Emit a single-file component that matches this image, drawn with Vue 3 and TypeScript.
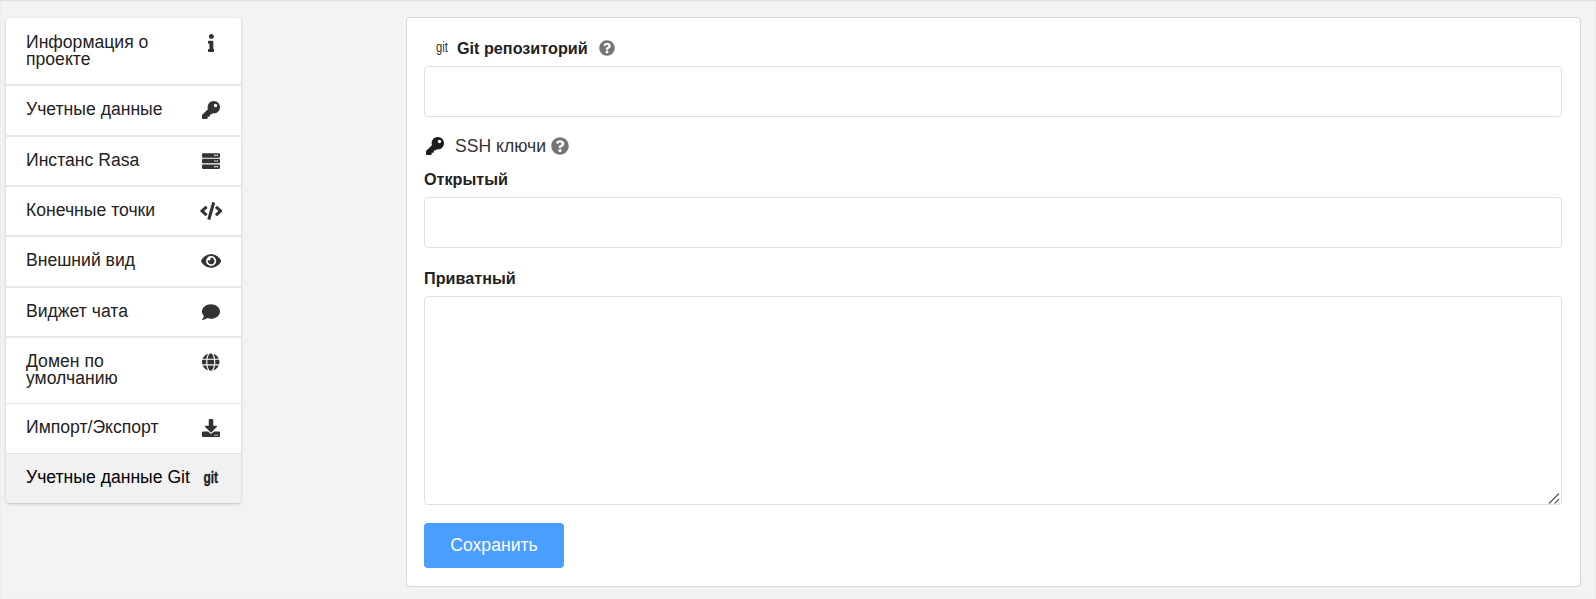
<script setup lang="ts">
type MenuItem = { label: string; viewBox?: string; path?: string; active?: boolean };

const keyPath =
  "M512 176.001C512 273.203 433.202 352 336 352c-11.22 0-22.19-1.062-32.827-3.069l-24.012 27.014A23.999 23.999 0 0 1 261.223 384H224v40c0 13.255-10.745 24-24 24h-40v40c0 13.255-10.745 24-24 24H24c-13.255 0-24-10.745-24-24v-78.059c0-6.365 2.529-12.47 7.029-16.971l161.802-161.802C163.108 213.814 160 195.271 160 176 160 78.798 238.797.001 335.999 0 433.488-.001 512 78.511 512 176.001zM336 128c0 26.51 21.49 48 48 48s48-21.49 48-48-21.49-48-48-48-48 21.49-48 48z";
const questionPath =
  "M504 256c0 136.997-111.043 248-248 248S8 392.997 8 256C8 119.083 119.043 8 256 8s248 111.083 248 248zM262.655 90c-54.497 0-89.255 22.957-116.549 63.758-3.536 5.286-2.353 12.415 2.715 16.258l34.699 26.31c5.205 3.947 12.621 3.008 16.665-2.122 17.864-22.658 30.113-35.797 57.303-35.797 20.429 0 45.698 13.148 45.698 32.958 0 14.976-12.363 22.667-32.534 33.976C247.128 238.528 216 254.941 216 296v4c0 6.627 5.373 12 12 12h56c6.627 0 12-5.373 12-12v-1.333c0-28.462 83.186-29.647 83.186-106.667 0-58.002-60.165-102-116.531-102zM256 338c-25.365 0-46 20.635-46 46 0 25.364 20.635 46 46 46s46-20.636 46-46c0-25.365-20.635-46-46-46z";

const items: MenuItem[] = [
  {
    label: "Информация о проекте",
    viewBox: "0 0 192 512",
    path: "M20 424.229h20V279.771H20c-11.046 0-20-8.954-20-20V212c0-11.046 8.954-20 20-20h112c11.046 0 20 8.954 20 20v212.229h20c11.046 0 20 8.954 20 20V492c0 11.046-8.954 20-20 20H20c-11.046 0-20-8.954-20-20v-47.771c0-11.046 8.954-20 20-20zM96 0C56.235 0 24 32.235 24 72s32.235 72 72 72 72-32.235 72-72S135.764 0 96 0z",
  },
  { label: "Учетные данные", viewBox: "0 0 512 512", path: keyPath },
  {
    label: "Инстанс Rasa",
    viewBox: "0 0 512 512",
    path: "M480 160H32c-17.673 0-32-14.327-32-32V64c0-17.673 14.327-32 32-32h448c17.673 0 32 14.327 32 32v64c0 17.673-14.327 32-32 32zm-48-88c-13.255 0-24 10.745-24 24s10.745 24 24 24 24-10.745 24-24-10.745-24-24-24zm-64 0c-13.255 0-24 10.745-24 24s10.745 24 24 24 24-10.745 24-24-10.745-24-24-24zm112 248H32c-17.673 0-32-14.327-32-32v-64c0-17.673 14.327-32 32-32h448c17.673 0 32 14.327 32 32v64c0 17.673-14.327 32-32 32zm-48-88c-13.255 0-24 10.745-24 24s10.745 24 24 24 24-10.745 24-24-10.745-24-24-24zm-64 0c-13.255 0-24 10.745-24 24s10.745 24 24 24 24-10.745 24-24-10.745-24-24-24zm112 248H32c-17.673 0-32-14.327-32-32v-64c0-17.673 14.327-32 32-32h448c17.673 0 32 14.327 32 32v64c0 17.673-14.327 32-32 32zm-48-88c-13.255 0-24 10.745-24 24s10.745 24 24 24 24-10.745 24-24-10.745-24-24-24zm-64 0c-13.255 0-24 10.745-24 24s10.745 24 24 24 24-10.745 24-24-10.745-24-24-24z",
  },
  {
    label: "Конечные точки",
    viewBox: "0 0 640 512",
    path: "M278.9 511.5l-61-17.7c-6.4-1.8-10-8.5-8.2-14.9L346.2 8.7c1.8-6.4 8.5-10 14.9-8.2l61 17.7c6.4 1.8 10 8.5 8.2 14.9L293.8 503.3c-1.9 6.4-8.5 10.1-14.9 8.2zm-114-112.2l43.5-46.4c4.6-4.9 4.3-12.7-.8-17.2L117 256l90.6-79.7c5.1-4.5 5.5-12.3.8-17.2l-43.5-46.4c-4.5-4.8-12.1-5.1-17-.5L3.8 247.2c-5.1 4.7-5.1 12.8 0 17.5l144.1 135.1c4.9 4.6 12.5 4.4 17-.5zm327.2.6l144.1-135.1c5.1-4.7 5.1-12.8 0-17.5L492.1 112.1c-4.8-4.5-12.4-4.3-17 .5L431.6 159c-4.6 4.9-4.3 12.7.8 17.2L523 256l-90.6 79.7c-5.1 4.5-5.5 12.3-.8 17.2l43.5 46.4c4.5 4.9 12.1 5.1 17 .6z",
  },
  {
    label: "Внешний вид",
    viewBox: "0 0 576 512",
    path: "M572.52 241.4C518.29 135.59 410.93 64 288 64S57.68 135.64 3.48 241.41a32.35 32.35 0 0 0 0 29.19C57.71 376.41 165.07 448 288 448s230.32-71.64 284.52-177.41a32.35 32.35 0 0 0 0-29.19zM288 400a144 144 0 1 1 144-144 143.93 143.93 0 0 1-144 144zm0-240a95.31 95.31 0 0 0-25.31 3.79 47.85 47.85 0 0 1-66.9 66.9A95.78 95.78 0 1 0 288 160z",
  },
  {
    label: "Виджет чата",
    viewBox: "0 0 512 512",
    path: "M256 32C114.6 32 0 125.1 0 240c0 49.6 21.4 95 57 130.7C44.5 421.1 2.7 466 2.2 466.5c-2.2 2.3-2.8 5.7-1.5 8.7S4.8 480 8 480c66.3 0 116-31.8 140.6-51.4 32.7 12.3 69 19.4 107.4 19.4 141.4 0 256-93.1 256-208S397.4 32 256 32z",
  },
  {
    label: "Домен по умолчанию",
    viewBox: "0 0 496 512",
    path: "M336.5 160C322 70.7 287.8 8 248 8s-74 62.7-88.5 152h177zM152 256c0 22.2 1.2 43.5 3.3 64h185.3c2.1-20.5 3.3-41.8 3.3-64s-1.2-43.5-3.3-64H155.3c-2.1 20.5-3.3 41.8-3.3 64zm324.7-96c-28.6-67.9-86.5-120.4-158-141.6 24.4 33.8 41.2 84.7 50 141.6h108zM177.2 18.4C105.8 39.6 47.8 92.1 19.3 160h108c8.7-56.9 25.5-107.8 49.9-141.6zM487.4 192H372.7c2.1 21 3.3 42.5 3.3 64s-1.2 43-3.3 64h114.6c5.5-20.5 8.6-41.8 8.6-64s-3.1-43.5-8.5-64zM120 256c0-21.5 1.2-43 3.3-64H8.6C3.2 212.5 0 233.8 0 256s3.2 43.5 8.6 64h114.6c-2-21-3.2-42.5-3.2-64zm39.5 96c14.5 89.3 48.7 152 88.5 152s74-62.7 88.5-152h-177zm159.3 141.6c71.4-21.2 129.4-73.7 158-141.6h-108c-8.8 56.9-25.6 107.8-50 141.6zM19.3 352c28.6 67.9 86.5 120.4 158 141.6-24.4-33.8-41.2-84.7-50-141.6h-108z",
  },
  {
    label: "Импорт/Экспорт",
    viewBox: "0 0 512 512",
    path: "M216 0h80c13.3 0 24 10.7 24 24v168h87.7c17.8 0 26.7 21.5 14.1 34.1L269.7 378.3c-7.5 7.5-19.8 7.5-27.3 0L90.1 226.1c-12.6-12.6-3.7-34.1 14.1-34.1H192V24c0-13.3 10.7-24 24-24zm296 376v112c0 13.3-10.7 24-24 24H24c-13.3 0-24-10.7-24-24V376c0-13.3 10.7-24 24-24h146.7l49 49c20.1 20.1 52.5 20.1 72.6 0l49-49H488c13.3 0 24 10.7 24 24zm-124 88c0-11-9-20-20-20s-20 9-20 20 9 20 20 20 20-9 20-20zm64 0c0-11-9-20-20-20s-20 9-20 20 9 20 20 20 20-9 20-20z",
  },
  { label: "Учетные данные Git", active: true },
];
</script>

<template>
  <div class="page">
    <nav class="menu">
      <a v-for="item in items" :key="item.label" class="item" :class="{ active: item.active }">
        <span class="text">{{ item.label }}</span>
        <span class="icon-box">
          <svg v-if="item.path" class="icon" :viewBox="item.viewBox">
            <path :d="item.path" />
          </svg>
          <span v-else class="git-mark">git</span>
        </span>
      </a>
    </nav>

    <form class="panel" @submit.prevent>
      <div class="git-label">
        <span class="git-small">git</span>
        <b>Git репозиторий</b>
        <svg class="help" viewBox="0 0 512 512"><path :d="questionPath" /></svg>
      </div>
      <input class="field" type="text" />

      <div class="ssh-label">
        <svg class="ssh-key" viewBox="0 0 512 512"><path :d="keyPath" /></svg>
        <span>SSH ключи</span>
        <svg class="help big" viewBox="0 0 512 512"><path :d="questionPath" /></svg>
      </div>

      <label class="label first">Открытый</label>
      <input class="field" type="text" />

      <label class="label">Приватный</label>
      <div class="area-wrap">
        <textarea class="field area"></textarea>
        <svg class="grip" viewBox="0 0 12 12">
          <path d="M1 11.5 11 1.5M6.5 11.5 11 7" />
        </svg>
      </div>

      <button class="save" type="submit">Сохранить</button>
    </form>
  </div>
</template>

<style>
html,
body {
  margin: 0;
  background: #f3f3f3;
}
</style>

<style scoped>
.page {
  display: grid;
  grid-template-columns: 400px 1175px;
  align-items: start;
  min-height: 599px;
  padding: 17px 0 0 6px;
  font-family: "Liberation Sans", Arial, sans-serif;
  color: #222;
  box-sizing: border-box;
  box-shadow: inset 0 1px 2px rgba(0, 0, 0, 0.1);
}
.menu {
  width: 235px;
  margin-top: 1px;
  display: flex;
  flex-direction: column;
  background: #fff;
  border-radius: 4px;
  box-shadow: 0 1px 3px rgba(0, 0, 0, 0.22);
  overflow: hidden;
}
.item {
  display: flex;
  justify-content: space-between;
  padding: 15.2px 18px 15.2px 20px;
  border-bottom: 2px solid #e9e9e9;
  font-size: 17.6px;
  line-height: 17.6px;
}
.item:first-child {
  padding-top: 15.8px;
}
.item:nth-child(7) {
  padding-top: 14.6px;
  border-bottom: 1px solid #e2e2e2;
}
.item:nth-child(8) {
  padding-bottom: 16.2px;
  border-bottom: 1px solid #e2e2e2;
}
.item:last-child {
  border-bottom: 0;
  padding-top: 14.4px;
  padding-bottom: 15.8px;
}
.item.active {
  background: #f1f1f1;
  color: #000;
}
.text {
  flex: 1;
}
.icon-box {
  flex: none;
  width: 24px;
  height: 18px;
  display: flex;
  justify-content: center;
}
.icon {
  height: 18px;
  fill: #333;
}
.git-mark {
  display: inline-block;
  font-weight: 700;
  font-size: 16px;
  line-height: 18px;
  color: #1a1a1a;
  -webkit-text-stroke: 0.3px #1a1a1a;
  transform: scaleX(0.75);
}
.panel {
  display: flex;
  flex-direction: column;
  align-items: flex-start;
  padding: 0 18px 18px 17px;
  background: #fff;
  border: 1px solid #d6d6d6;
  border-radius: 4px;
}
.git-label {
  height: 48px;
  display: flex;
  align-items: center;
  padding: 12px 0 0 12px;
  box-sizing: border-box;
  font-size: 16.2px;
}
.git-small {
  display: inline-block;
  width: 21px;
  font-size: 14px;
  line-height: 14px;
  margin-top: -3px;
  color: #333;
  transform: scaleX(0.8);
  transform-origin: left center;
}
.help {
  width: 16px;
  height: 16px;
  margin-left: 11px;
  fill: #757575;
}
.help.big {
  width: 18px;
  height: 18px;
  margin-left: 5px;
}
.field {
  width: 100%;
  height: 51px;
  box-sizing: border-box;
  border: 1px solid #e0e0e0;
  border-radius: 4px;
  background: #fff;
  outline: none;
  margin: 0;
  display: block;
}
.ssh-label {
  display: flex;
  align-items: center;
  margin-top: 18px;
  height: 22px;
  font-size: 17.6px;
  color: #333;
}
.ssh-key {
  width: 18px;
  height: 18px;
  margin: 0 11px 0 2px;
  fill: #1c1c1c;
}
.label {
  display: block;
  margin: 22px 0 9px;
  font-size: 16.2px;
  line-height: 17px;
  font-weight: 700;
  color: #222;
}
.label.first {
  margin-top: 14px;
}
.area-wrap {
  position: relative;
  width: 100%;
}
.area {
  height: 209px;
  resize: none;
}
.grip {
  position: absolute;
  right: 2px;
  bottom: 1px;
  width: 12px;
  height: 12px;
  fill: none;
  stroke: #5a5a5a;
  stroke-width: 1.2;
}
.save {
  width: 140px;
  height: 45px;
  margin-top: 18px;
  border: 0;
  border-radius: 4px;
  background: #4a9eff;
  color: #fff;
  font-family: inherit;
  font-size: 17.6px;
}
</style>
